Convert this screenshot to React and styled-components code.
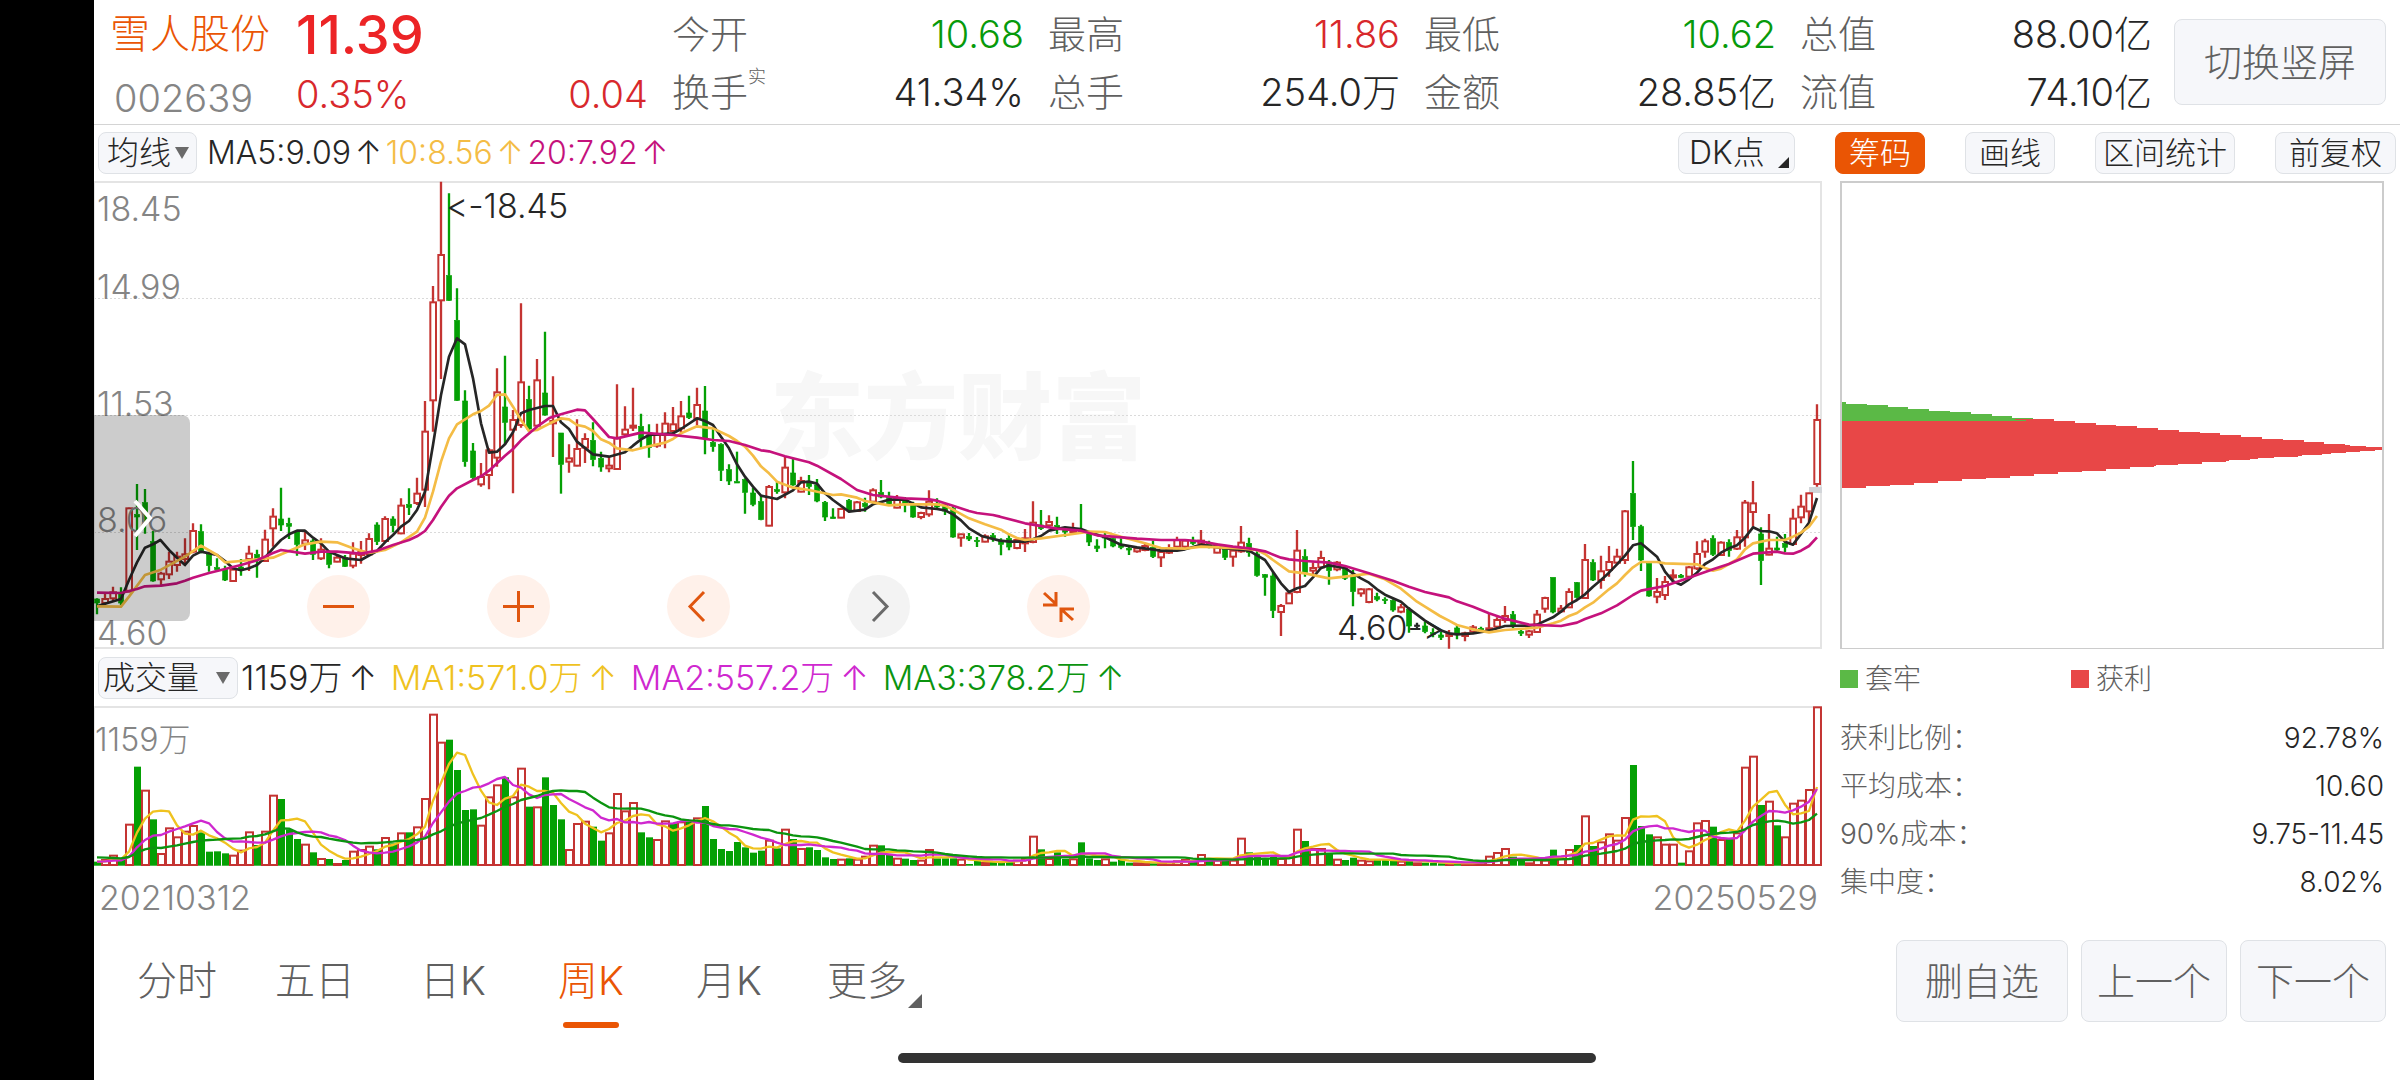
import React, { useState } from "react";
import styled, { createGlobalStyle, css } from "styled-components";

const GlobalStyle = createGlobalStyle`
  *, *::before, *::after { box-sizing: border-box; }
  body { margin: 0; background: #fff; }
  body, button, select {
    font-family: Inter, "Noto Sans CJK SC", "Noto Sans", sans-serif;
    font-weight: 300;
  }
`;

const C = {
  accent: "#ea5504",
  up: "#d8282c",
  down: "#079a0b",
  candleUp: "#c43432",
  candleDown: "#04a004",
  ink: "#262626",
  label: "#606060",
  muted: "#858585",
  ma5: "#262626",
  ma10: "#f4bc45",
  ma20: "#c5127c",
  vol5: "#efc21f",
  vol10: "#cf28cf",
  vol20: "#0b940f",
  stuck: "#5bb946",
  profit: "#e84747",
};

/* ---------- data ---------- */

// Weekly candles: direction, high, body top, body bottom, low. Three chart units make one pixel.
const parse = (text, dy) =>
  text
    .trim()
    .split(/\s*;\s*/)
    .map((row) => {
      const [dir, ...v] = row.split(/[\s,]+/);
      return { dir, v: v.map((n) => Number(n) + dy) };
    });

const candles = [
  ...parse(
    `g 1270,1272,1284,1318;r 1255,1272,1284,1290;r 1235,1252,1270,1278;g 1237,1255,1284,1290;r 998,1000,1250,1250;
g 927,1018,1026,1125;g 942,983,1040,1076;g 1068,1100,1218,1220;r 1190,1196,1213,1230;r 1130,1160,1198,1212;
r 1130,1145,1170,1190;r 1090,1138,1152,1168;r 1045,1068,1130,1135;g 1048,1070,1130,1135;g 1130,1138,1172,1190;
g 1150,1178,1184,1190;g 1172,1184,1215,1218;r 1180,1184,1218,1220;g 1152,1176,1186,1202;r 1112,1136,1152,1188;
g 1124,1138,1152,1208;r 1064,1094,1158,1160;r 1000,1025,1060,1115;g 938,1032,1050,1068;g 1028,1045,1054,1092;
g 1065,1070,1108,1142;r 1066,1096,1106,1125;g 1092,1098,1138,1155;r 1090,1124,1150,1155;g 1130,1132,1168,1180;
r 1142,1148,1160,1162;g 1140,1148,1174,1176;r 1102,1136,1172,1180;r 1098,1130,1140,1166;r 1075,1092,1138,1140;
g 1042,1050,1100,1110;r 1024,1032,1098,1102;g 1024,1032,1052,1072;r 970,992,1075,1078;g 940,988,998,1020;
r 908,956,984,990;r 678,770,944,996;r 333,382,676,770;r 20,240,376,612;g 55,302,376,378;
g 340,436,676,678;g 646,678,860,875;g 804,828,908,915;r 864,906,928,935;r 820,826,900,943;
r 580,652,848,875;g 542,696,742,810;r 705,735,764,955;r 385,622,750,758;g 632,674,762,770;
r 552,616,752,756;g 470,654,720,722;r 604,738,745,846;g 774,774,868,956;r 808,850,860,893;
r 733,822,872,874;r 775,792,818,864;g 742,796,854,874;g 830,850,876,890;r 845,872,880,892;
r 628,790,882,884;r 694,764,778,784;r 638,752,758,768;g 716,754,790,820;g 748,780,818,848;
r 746,780,812,818;r 712,746,780,820;r 696,748,768,775;r 678,724,760,775;g 662,714,728,732;
r 638,690,730,752;g 633,708,790,838;g 760,802,815,830;g 805,808,886,918;g 868,884,918,930;
g 830,920,924,924;g 910,914,952,1016;g 938,954,988,994;g 960,980,1034,1036;r 930,936,1052,1054;
g 918,944,950,956;r 845,878,952,970;g 850,894,930,932;r 905,918,950,952;g 900,920,935,960;
g 912,930,978,982;g 978,982,1026,1038;g 1000,1026,1031,1032;r 998,1002,1028,1030;g 972,976,1006,1012;
r 978,982,1008,1010;g 968,985,995,1010;r 940,946,980,985;g 915,952,966,970;g 950,966,988,992;
r 960,970,998,1000;g 966,974,985,1012;g 980,985,1026,1028;r 1010,1014,1026,1033;r 946,980,1018,1025;
g 970,986,996,1000;g 985,992,1008,1020;g 992,1000,1086,1088;r 1076,1078,1088,1115;g 1074,1084,1092,1098;
g 1086,1096,1100,1116;r 1078,1084,1100,1102;g 1074,1082,1090,1100;g 1090,1100,1108,1141;g 1080,1090,1116,1126`,
    0
  ),
  ...parse(
    `r 625,630,654,658;r 597,625,640,666;r 514,578,636,640;g 540,585,596,600;r 556,576,586,592;
g 560,586,598,612;g 590,598,606,620;r 578,600,606,608;g 522,598,604,606;g 604,612,636,648;
g 628,648,655,666;g 608,618,624,655;g 620,626,648,652;g 625,644,652,658;g 646,655,660,675;
r 650,655,664,668;r 638,648,660,664;g 632,652,680,684;r 660,666,682,711;r 643,656,668,672;
r 620,630,650,655;r 628,632,650,654;g 620,634,640,645;r 600,632,640,645;g 632,640,650,655;
r 640,648,668,670;g 650,658,682,690;r 655,662,680,710;r 588,638,664,668;g 623,640,668,680;
g 664,672,736,740;g 732,734,742,797;g 726,738,842,864;r 822,828,846,918;r 785,790,820,822;
r 600,662,786,790;g 658,680,728,740;r 697,714,722,732;r 662,684,712,718;g 690,696,722,764;
r 693,698,718,724;g 705,712,745,750;g 720,735,785,829;r 775,778,790,800;r 774,778,816,820;
g 788,800,808,814;g 802,808,812,822;g 808,812,840,845;r 822,832,845,850;g 832,838,888,908;
k 878,885,890,900;g 875,888,905,910;g 895,908,914,922`,
    465
  ),
  ...parse(
    `g 755,765,772,780;r 750,762,768,806;g 738,744,762,778;r 755,760,768,784;r 735,742,755,758;
g 740,745,752,755;r 702,745,750,755;r 712,720,740,745;r 678,708,720,728;g 693,704,740,745;
g 750,754,760,768;r 750,754,764,774;r 690,704,756,758;r 650,654,686,698;g 592,592,696,700;
r 675,686,694,698;r 625,636,682,684;g 606,608,652,656;r 492,540,654,656;g 538,548,600,603;
r 527,574,600,626;r 498,546,570,590;r 506,530,548,555;r 390,394,540,552;g 243,340,440,480;
g 434,440,540,573;g 545,550,648,650;r 594,636,650,670;r 588,606,645,660;r 568,586,592,600;
g 582,586,592,595;r 558,562,590,592;r 484,522,565,570;r 476,484,515,533;g 466,476,523,528;
r 484,488,525,528;g 478,488,512,530;r 450,472,506,510;r 360,368,472,500;r 303,370,396,440;
g 442,462,542,615;r 402,506,524,526;g 470,504,510,516;g 462,490,502,516;r 386,416,492,495;
r 344,380,412,430;r 338,340,394,430;r 73,120,312,320`,
    615
  ),
];

const shift = (text, dx, dy) =>
  text
    .trim()
    .split(/\s+/)
    .map((p) => {
      const [x, y] = p.split(",").map(Number);
      return `${x + dx},${y + dy}`;
    })
    .join(" ");

const line = (a, b, c, d) =>
  [shift(a, 0, 0), shift(b, 1380, 0), shift(c, 2730, 465), shift(d, 3930, 615)].join(" ");

const ma5 = line(
  "21,1294 45,1286 93,1272 117,1215 141,1162 165,1118 189,1108 211,1095 237,1125 261,1148 285,1170 309,1142 333,1130 381,1140 405,1158 429,1180 453,1186 477,1180 501,1170 525,1148 549,1120 573,1095 597,1078 621,1067 645,1067 669,1088 693,1105 717,1130 765,1150 813,1155 861,1128 885,1102 909,1080 933,1055 957,1038 981,1005 1005,950 1029,810 1053,660 1077,545 1101,490 1125,508 1149,610 1173,745 1197,833 1221,830 1245,808 1269,772 1293,715 1317,705 1365,693",
  "9,693 33,742 57,762 81,800 129,838 177,845 225,832 249,812 273,793 297,780 369,775 393,762 441,730 465,738 489,750 513,785 537,820 561,868 585,905 609,935 633,962 681,972 729,946 753,922 777,920 801,926 825,955 849,975 897,1010 945,1004 969,988 1017,974 1065,974 1113,997 1161,1002 1185,1006 1209,1018 1233,1036 1257,1060 1297,1084",
  "0,632 30,635 75,635 99,628 123,618 147,602 195,592 243,597 267,606 315,622 363,644 411,652 483,662 531,662 555,658 603,644 651,652 747,662 795,690 819,725 843,760 867,786 891,775 915,768 939,742 963,714 987,706 1035,714 1059,730 1083,745 1107,758 1131,778 1155,794 1203,815 1227,836 1275,872 1320,900",
  "147,760 171,763 219,760 267,752 315,738 387,737 411,734 459,712 483,695 507,673 531,660 555,643 579,620 603,600 627,578 651,553 675,527 699,496 723,490 747,510 771,530 795,575 819,604 843,614 867,598 891,578 915,552 939,538 963,518 987,505 1011,496 1035,473 1059,442 1083,453 1107,454 1131,460 1155,485 1179,494 1203,462 1227,428 1251,354"
);

const ma10 = line(
  "21,1294 93,1295 117,1265 165,1200 213,1184 285,1145 333,1112 381,1140 405,1162 453,1158 549,1148 597,1128 645,1108 693,1100 741,1102 789,1120 837,1134 885,1125 933,1102 981,1070 1005,1028 1029,950 1053,860 1077,790 1101,748 1149,718 1173,708 1197,692 1221,660 1245,658 1269,695 1293,735 1317,768 1341,765",
  "0,745 33,730 57,733 81,750 105,755 129,768 153,793 177,803 201,820 249,826 297,814 345,803 369,792 393,775 441,754 489,760 537,783 561,798 585,815 609,842 633,874 657,895 681,920 729,938 777,945 849,960 873,958 921,968 945,978 1017,991 1065,988 1161,988 1185,992 1209,1004 1257,1030 1305,1048 1353,1064",
  "27,613 51,624 75,630 123,625 219,612 267,605 315,606 363,620 435,640 483,654 555,656 603,650 723,655 771,660 795,672 819,690 867,724 915,730 987,745 1035,740 1107,731 1155,748 1203,776 1251,815 1275,830 1320,858",
  "147,722 171,735 219,748 267,757 315,750 411,743 459,730 483,722 507,708 531,699 555,682 579,668 603,648 627,628 651,610 675,585 699,562 723,546 771,546 795,550 891,553 915,564 939,572 963,566 987,552 1011,538 1035,508 1059,490 1107,480 1155,480 1179,470 1203,458 1227,440 1251,408"
);

const ma20 = line(
  "21,1253 93,1254 141,1242 165,1234 213,1232 261,1225 285,1217 309,1208 357,1194 405,1182 453,1170 501,1156 549,1134 573,1125 645,1136 693,1130 741,1130 813,1136 861,1127 909,1110 957,1095 981,1084 1005,1068 1029,1035 1053,996 1077,962 1101,940 1149,915 1173,904 1197,887 1245,842 1269,822 1293,796 1341,755",
  "0,728 33,718 81,704 105,706 129,732 177,786 201,790 273,773 369,780 441,788 489,795 537,798 585,810 633,826 657,829 705,844 777,862 801,872 873,912 921,945 969,960 1065,970 1137,973 1161,977 1209,992 1257,1008 1281,1014 1329,1020",
  "0,560 75,580 171,596 243,602 291,616 411,626 483,630 555,630 603,634 651,643 699,650 747,655 795,664 843,683 867,688 915,693 987,698 1035,708 1107,730 1179,752 1227,770 1275,786 1320,796",
  "147,652 171,664 219,680 267,700 315,716 387,734 483,738 531,728 555,717 603,700 651,676 699,645 723,632 795,618 867,593 939,568 987,552 1059,521 1131,515 1155,520 1179,521 1203,512 1227,498 1251,472"
);

// Top edge of each volume bar; the base line is at 678.
const BASE = 678;
const volTops = [
  665, 658, 645, 655, 552, 380, 450, 538, 640, 563, 590, 573, 556, 577, 635, 634, 640, 645, 630, 575,
  615, 573, 465, 477, 568, 597, 612, 637, 655, 657, 670, 660, 633, 628, 618, 628, 592, 610, 578, 577,
  560, 475, 222, 306, 299, 390, 510, 508, 555, 470, 434, 412, 470, 384, 500, 500, 412, 495, 538, 628,
  550, 543, 560, 602, 578, 460, 512, 487, 577, 592, 598, 542, 550, 545, 545, 533, 498, 597, 627, 633,
  606, 622, 638, 632, 600, 625, 567, 597, 625, 622, 630, 652, 657, 657, 655, 657, 648, 615, 616, 645,
  654, 656, 660, 660, 628, 655, 655, 655, 657, 672, 662, 667, 665, 665, 665, 660, 655, 588, 628, 655,
  637, 657, 656, 607, 655, 660, 656, 665, 660, 668, 668, 668, 670, 668, 665, 662, 658, 660, 643, 655,
  660, 663, 660, 594, 637, 650, 655, 650, 655, 650, 567, 603, 625, 625, 640, 657, 660, 653, 660, 662,
  660, 660, 660, 663, 660, 668, 668, 668, 670, 670, 670, 668, 668, 666, 648, 637, 625, 650, 662, 668,
  655, 660, 629, 655, 628, 615, 527, 618, 605, 581, 600, 532, 375, 558, 583, 590, 612, 612, 668, 632,
  548, 541, 560, 598, 595, 578, 381, 348, 495, 483, 556, 590, 489, 480, 448, 200,
];
// Weeks whose bar takes the other colour than its candle.
const volFlip = new Set([6, 18, 57, 72, 96, 126, 173, 165, 211]);

const seeded = [...Array(10).fill(637), ...Array(10).fill(665), ...volTops];
const volAverage = (n) =>
  volTops
    .map((_, i) => {
      const part = seeded.slice(i + 21 - n, i + 21);
      return `${21 + 24 * i},${Math.round(part.reduce((a, b) => a + b, 0) / n)}`;
    })
    .join(" ");

const chipRows = [
  ...Array.from({ length: 27 }, (_, k) => ({ y: 221 + k * 1.74, w: 4 + k * 20.8 })),
  ...Array.from({ length: 22 }, (_, k) => ({ y: 305 - k * 1.74, w: 24 + k * 24 })),
];

const quotes = [
  [["今开", "10.68", C.down], ["换手", "41.34%", C.ink, "实"]],
  [["最高", "11.86", C.up], ["总手", "254.0万", C.ink]],
  [["最低", "10.62", C.down], ["金额", "28.85亿", C.ink]],
  [["总值", "88.00亿", C.ink], ["流值", "74.10亿", C.ink]],
];

const priceReadings = [
  ["MA5:9.09", C.ink],
  ["10:8.56", C.ma10],
  ["20:7.92", C.ma20],
];

const volumeReadings = [
  ["1159万", C.ink],
  ["MA1:571.0万", C.vol5],
  ["MA2:557.2万", C.vol10],
  ["MA3:378.2万", C.vol20],
];

const stats = [
  ["获利比例：", "92.78%"],
  ["平均成本：", "10.60"],
  ["90%成本：", "9.75-11.45"],
  ["集中度：", "8.02%"],
];

/* ---------- styled parts ---------- */

const Shell = styled.div`
  display: flex;
  min-height: 100vh;
  background: #fff;
  color: ${C.ink};
`;
const Cutout = styled.div`
  flex: none;
  width: 94px;
  background: #000;
`;
const Main = styled.main`
  flex: 1;
  min-width: 0;
  display: flex;
  flex-direction: column;
`;

const Header = styled.header`
  display: flex;
  align-items: flex-start;
  gap: 24px;
  padding: 5px 14px 1px 16px;
  border-bottom: 1px solid #d4d4d4;
`;
const Identity = styled.div`
  flex: none;
  width: 162px;
`;
const StockName = styled.h1`
  margin: 0;
  font-size: 40px;
  font-weight: 300;
  line-height: 58px;
  color: ${C.accent};
  white-space: nowrap;
`;
const StockCode = styled.div`
  margin-top: 10px;
  padding-left: 4px;
  font-size: 38px;
  line-height: 50px;
  color: ${C.muted};
`;
const Quotes = styled.div`
  flex: 1;
  display: grid;
  grid-template-columns: repeat(5, minmax(0, 1fr));
  column-gap: 24px;
`;
const Price = styled.div`
  font-size: 54px;
  font-weight: 500;
  line-height: 60px;
  color: #ec2426;
`;
const Change = styled.div`
  display: flex;
  justify-content: space-between;
  font-size: 38px;
  line-height: 58px;
  color: ${C.up};
`;
const QuoteRow = styled.div`
  display: flex;
  justify-content: space-between;
  font-size: 38px;
  line-height: 58px;
  white-space: nowrap;
`;
const QuoteLabel = styled.span`
  display: flex;
  color: ${C.label};
`;
const Mark = styled.sup`
  font-size: 18px;
  line-height: 28px;
`;
const Tinted = styled.span`
  color: ${(p) => p.$color};
`;

const boxed = css`
  border: 1px solid #dfe2e6;
  background: #f6f7fa;
  border-radius: 8px;
  cursor: pointer;
`;
const BigButton = styled.button`
  ${boxed}
  flex: none;
  height: ${(p) => p.$height}px;
  padding: 0 ${(p) => p.$pad}px;
  font-size: 38px;
  line-height: 50px;
  color: ${C.label};
  white-space: nowrap;
`;
const SwitchButton = styled(BigButton)`
  margin: 14px 0 0 -2px;
`;

const Toolbar = styled.div`
  display: flex;
  align-items: center;
  height: ${(p) => p.$height}px;
  padding: 0 4px;
  font-size: ${(p) => p.$size}px;
  line-height: 42px;
  white-space: nowrap;
`;
const Readings = styled.div`
  display: flex;
  gap: ${(p) => p.$gap}px;
  margin-left: ${(p) => p.$start}px;
`;
const Reading = styled.span`
  display: flex;
  align-items: baseline;
  gap: ${(p) => p.$gap}px;
  color: ${(p) => p.$color};
`;
const Tools = styled.div`
  display: flex;
  gap: 40px;
  margin-left: auto;
`;
const ToolButton = styled.button`
  ${boxed}
  height: 42px;
  padding: 0 ${(p) => p.$pad ?? 13}px;
  font-size: 31px;
  line-height: 38px;
  color: ${C.ink};
  ${(p) =>
    p.$active &&
    css`
      background: ${C.accent};
      border-color: ${C.accent};
      color: #fff;
    `}
`;
const Picker = styled.label`
  position: relative;
  display: block;
`;
const PickerSelect = styled.select`
  ${boxed}
  display: block;
  appearance: none;
  width: ${(p) => p.$width}px;
  height: 42px;
  margin: 0;
  padding: 0 0 0 ${(p) => p.$pad}px;
  font-size: 32px;
  line-height: 38px;
  color: ${C.ink};
`;
const Caret = styled.svg`
  position: absolute;
  right: 8px;
  top: 15px;
  width: 14px;
  height: 12px;
  pointer-events: none;
`;
const Corner = styled.svg`
  position: absolute;
  right: ${(p) => p.$right}px;
  bottom: ${(p) => p.$bottom}px;
  width: ${(p) => p.$w}px;
  height: ${(p) => p.$h}px;
  pointer-events: none;
`;

const Board = styled.div`
  display: grid;
  grid-template-columns: minmax(0, 1fr) 544px;
  column-gap: 18px;
  padding-right: 16px;
`;
const ChartBox = styled.div`
  position: relative;
`;
const Plot = styled.svg`
  display: block;
  width: 100%;
  height: auto;
  font-weight: 300;
  font-variant-ligatures: no-contextual;
`;
const ChartTools = styled.div`
  position: absolute;
  left: 213px;
  bottom: 11px;
  display: flex;
  gap: 117px;
`;
const RoundButton = styled.button`
  width: 63px;
  height: 63px;
  padding: 0;
  border: 0;
  border-radius: 50%;
  background: ${(p) => (p.$idle ? "#f3f3f3" : "#fff1ea")};
  color: ${(p) => (p.$idle ? "#6a6a6a" : "#e0560f")};
  cursor: pointer;
  svg { display: block; }
`;
const Handle = styled.button`
  position: absolute;
  left: 0;
  bottom: 28px;
  width: 96px;
  height: 206px;
  padding: 0;
  border: 0;
  border-radius: 0 8px 8px 0;
  background: rgba(0, 0, 0, 0.2);
  cursor: pointer;
  svg { display: block; }
`;
const ChipBox = styled.div`
  border: 2px solid #ccc;
  border-bottom-width: 1px;
`;
const Dates = styled.div`
  display: flex;
  justify-content: space-between;
  padding: 0 4px 0 5px;
  font-size: 34px;
  line-height: 64px;
  color: ${C.muted};
`;

const Stats = styled.section`
  color: ${C.label};
  font-size: 28px;
`;
const Legend = styled.div`
  display: grid;
  grid-template-columns: 231px 1fr;
  line-height: 60px;
  margin-bottom: 5px;
`;
const LegendItem = styled.div`
  display: flex;
  align-items: center;
  gap: 7px;
  &::before {
    content: "";
    width: 18px;
    height: 18px;
    background: ${(p) => p.$color};
  }
`;
const StatList = styled.dl`
  margin: 0;
`;
const StatRow = styled.div`
  display: flex;
  justify-content: space-between;
  line-height: 48px;
  dt { margin: 0; }
  dd { margin: 0; color: ${C.ink}; }
`;

const Footer = styled.footer`
  display: flex;
  justify-content: space-between;
  align-items: flex-start;
  padding: 0 14px;
`;
const Tabs = styled.div`
  display: flex;
`;
const Tab = styled.button`
  position: relative;
  width: 138px;
  height: 98px;
  padding: 4px 0 0;
  border: 0;
  background: none;
  font-size: 40px;
  line-height: 50px;
  color: ${(p) => (p.$active ? C.accent : C.label)};
  cursor: pointer;
  ${(p) =>
    p.$active &&
    css`
      &::after {
        content: "";
        position: absolute;
        left: 41px;
        bottom: 0;
        width: 56px;
        height: 6px;
        border-radius: 3px;
        background: ${C.accent};
      }
    `}
`;
const Actions = styled.div`
  display: flex;
  gap: 13px;
  padding-top: 10px;
`;
const HomeBar = styled.div`
  align-self: center;
  width: 698px;
  max-width: 60%;
  height: 10px;
  margin-top: 25px;
  border-radius: 5px;
  background: #333;
`;

/* ---------- pieces ---------- */

function DropDown({ name, value, width, pad }) {
  return (
    <Picker>
      <PickerSelect aria-label={name} defaultValue={value} $width={width} $pad={pad}>
        <option>{value}</option>
      </PickerSelect>
      <Caret viewBox="0 0 14 12" aria-hidden="true">
        <path d="M0 0H14L7 12Z" fill="#6a6a6a" />
      </Caret>
    </Picker>
  );
}

function ReadingList({ items, start, gap, arrowGap }) {
  return (
    <Readings $start={start} $gap={gap}>
      {items.map(([text, color]) => (
        <Reading key={text} $color={color} $gap={arrowGap}>
          <span>{text}</span>
          <span>↑</span>
        </Reading>
      ))}
    </Readings>
  );
}

function PriceChart() {
  return (
    <Plot viewBox="0 0 1728 468" role="img" aria-label="周K线图">
      <text x="676" y="271" fontSize="94" fontWeight="900" fill="#f7f7f7">东方财富</text>
      <g stroke="#dadada" strokeDasharray="2 2">
        <path d="M0 117.500H1728M0 234.500H1728M0 351.500H1728" />
      </g>
      <path d="M0 1H1727V467H0" fill="none" stroke="#e4e4e4" strokeWidth="2" />
      <path d="M.5 0V468" stroke="#e4e4e4" />
      <rect x="1715" y="306" width="13" height="6" fill="#d2d5d9" />
      <g transform="scale(0.33333) translate(-12 -18)">
        {candles.map(({ dir, v: [hi, top, bot, lo] }, i) => {
          const x = 21 + 24 * i;
          const color = dir === "r" ? C.candleUp : dir === "g" ? C.candleDown : C.ink;
          const h = Math.max(bot - top, 4);
          return (
            <g key={i} stroke={color}>
              <path d={`M${x} ${hi}V${top}M${x} ${bot}V${lo}`} strokeWidth="7" />
              {dir === "r" ? (
                <rect x={x - 8} y={top} width="17" height={h} fill="#fff" strokeWidth="6" />
              ) : (
                <rect x={x - 7} y={top} width="15" height={h} fill={color} strokeWidth="2" />
              )}
            </g>
          );
        })}
      </g>
      <g fontSize="34" fill={C.muted}>
        <text x="3" y="40">18.45</text>
        <text x="3" y="118">14.99</text>
        <text x="3" y="235">11.53</text>
        <text x="3" y="351">8.06</text>
        <text x="3" y="464">4.60</text>
      </g>
      <g transform="scale(0.33333) translate(-12 -18)">
        <g fill="none" strokeWidth="8" strokeLinejoin="round">
          <polyline points={ma5} stroke={C.ma5} />
          <polyline points={ma10} stroke={C.ma10} />
          <polyline points={ma20} stroke={C.ma20} />
        </g>
      </g>
      <g fontSize="34" fill={C.ink}>
        <text x="352" y="37">&lt;-18.45</text>
        <text x="1243" y="459">4.60-&gt;</text>
      </g>
    </Plot>
  );
}

function VolumeChart() {
  return (
    <Plot viewBox="0 0 1728 160" role="img" aria-label="成交量图">
      <path d="M0 1H1728" stroke="#e4e4e4" strokeWidth="2" />
      <path d="M0 159.500H1728" stroke="#e4e4e4" />
      <path d="M.5 0V160M1727 0V160" stroke="#e4e4e4" />
      <text x="1" y="45" fontSize="32" fill={C.muted}>1159万</text>
      <g transform="scale(0.33333) translate(-12 -198)">
        {volTops.map((top, i) => {
          const x = 21 + 24 * i;
          const up = (candles[i].dir === "r") !== volFlip.has(i);
          return up ? (
            <rect key={i} x={x - 9} y={top + 2} width="21" height={BASE - top - 5} fill="#fff" stroke={C.candleUp} strokeWidth="6" />
          ) : (
            <rect key={i} x={x - 9} y={top} width="21" height={BASE - top - 1} fill={C.candleDown} />
          );
        })}
        <g fill="none" strokeWidth="7" strokeLinejoin="round">
          <polyline points={volAverage(5)} stroke={C.vol5} />
          <polyline points={volAverage(10)} stroke={C.vol10} />
          <polyline points={volAverage(20)} stroke={C.vol20} />
        </g>
      </g>
    </Plot>
  );
}

function ChipChart() {
  return (
    <Plot viewBox="0 0 540 465" role="img" aria-label="筹码分布" shapeRendering="crispEdges">
      {chipRows.map((r, i) => (
        <rect key={i} x="0" y={r.y - 2} width={Math.min(r.w, 540)} height="2" fill={r.y < 238 ? C.stuck : C.profit} />
      ))}
      <path d="M0 221L190 238H0Z" fill={C.stuck} />
      <path d="M0 238H190L540 265V267L0 304Z" fill={C.profit} />
    </Plot>
  );
}

const icons = {
  缩小: <path d="M16 31.500H47" />,
  放大: <path d="M16 31.500H47M31.500 16V47" />,
  左移: <path d="M37 17L23 31.500L37 46" />,
  右移: <path d="M26 17L40 31.500L26 46" />,
  收起: <path d="M17 18L29 29M29 17V30H16M46 45L34 34M34 47V34H47" />,
};

const periods = ["分时", "五日", "日K", "周K", "月K", "更多"];

export default function App() {
  const [period, setPeriod] = useState("周K");
  return (
    <>
      <GlobalStyle />
      <Shell>
        <Cutout />
        <Main>
          <Header>
            <Identity>
              <StockName>雪人股份</StockName>
              <StockCode>002639</StockCode>
            </Identity>
            <Quotes>
              <div>
                <Price>11.39</Price>
                <Change>
                  <span>0.35%</span>
                  <span>0.04</span>
                </Change>
              </div>
              {quotes.map((rows) => (
                <div key={rows[0][0]}>
                  {rows.map(([label, value, color, mark]) => (
                    <QuoteRow key={label}>
                      <QuoteLabel>
                        {label}
                        {mark && <Mark>{mark}</Mark>}
                      </QuoteLabel>
                      <Tinted $color={color}>{value}</Tinted>
                    </QuoteRow>
                  ))}
                </div>
              ))}
            </Quotes>
            <SwitchButton $height={86} $pad={29}>切换竖屏</SwitchButton>
          </Header>

          <Toolbar $height={56} $size={32}>
            <DropDown name="主图指标" value="均线" width={99} pad={8} />
            <ReadingList items={priceReadings} start={10} gap={4} arrowGap={4} />
            <Tools>
              <Picker>
                <PickerSelect aria-label="DK点" defaultValue="DK点" $width={117} $pad={10}>
                  <option>DK点</option>
                </PickerSelect>
                <Corner viewBox="0 0 11 11" $right={6} $bottom={6} $w={11} $h={11} aria-hidden="true">
                  <path d="M11 0V11H0Z" fill={C.ink} />
                </Corner>
              </Picker>
              <ToolButton $active>筹码</ToolButton>
              <ToolButton>画线</ToolButton>
              <ToolButton $pad={7}>区间统计</ToolButton>
              <ToolButton>前复权</ToolButton>
            </Tools>
          </Toolbar>

          <Board>
            <ChartBox>
              <PriceChart />
              <Handle aria-label="展开">
                <svg viewBox="0 0 96 206" width="96" height="206" fill="none" stroke="#fff" strokeWidth="4">
                  <path d="M41 86L56 103L41 121" />
                </svg>
              </Handle>
              <ChartTools>
                {Object.entries(icons).map(([name, icon]) => (
                  <RoundButton key={name} aria-label={name} $idle={name === "右移"}>
                    <svg viewBox="0 0 63 63" width="63" height="63" fill="none" stroke="currentColor" strokeWidth="3">
                      {icon}
                    </svg>
                  </RoundButton>
                ))}
              </ChartTools>
            </ChartBox>
            <ChipBox>
              <ChipChart />
            </ChipBox>

            <div>
              <Toolbar $height={57} $size={34}>
                <DropDown name="副图指标" value="成交量" width={140} pad={4} />
                <ReadingList items={volumeReadings} start={3} gap={14} arrowGap={6} />
              </Toolbar>
              <VolumeChart />
              <Dates>
                <span>20210312</span>
                <span>20250529</span>
              </Dates>
            </div>
            <Stats>
              <Legend>
                <LegendItem $color={C.stuck}>套牢</LegendItem>
                <LegendItem $color={C.profit}>获利</LegendItem>
              </Legend>
              <StatList>
                {stats.map(([label, value]) => (
                  <StatRow key={label}>
                    <dt>{label}</dt>
                    <dd>{value}</dd>
                  </StatRow>
                ))}
              </StatList>
            </Stats>
          </Board>

          <Footer>
            <Tabs role="tablist">
              {periods.map((p) => (
                <Tab key={p} role="tab" aria-selected={p === period} $active={p === period} onClick={() => setPeriod(p)}>
                  {p}
                  {p === "更多" && (
                    <Corner viewBox="0 0 14 14" $right={14} $bottom={20} $w={14} $h={14} aria-hidden="true">
                      <path d="M14 0V14H0Z" fill={C.label} />
                    </Corner>
                  )}
                </Tab>
              ))}
            </Tabs>
            <Actions>
              <BigButton $height={82} $pad={28}>删自选</BigButton>
              <BigButton $height={82} $pad={15}>上一个</BigButton>
              <BigButton $height={82} $pad={15}>下一个</BigButton>
            </Actions>
          </Footer>
          <HomeBar />
        </Main>
      </Shell>
    </>
  );
}
